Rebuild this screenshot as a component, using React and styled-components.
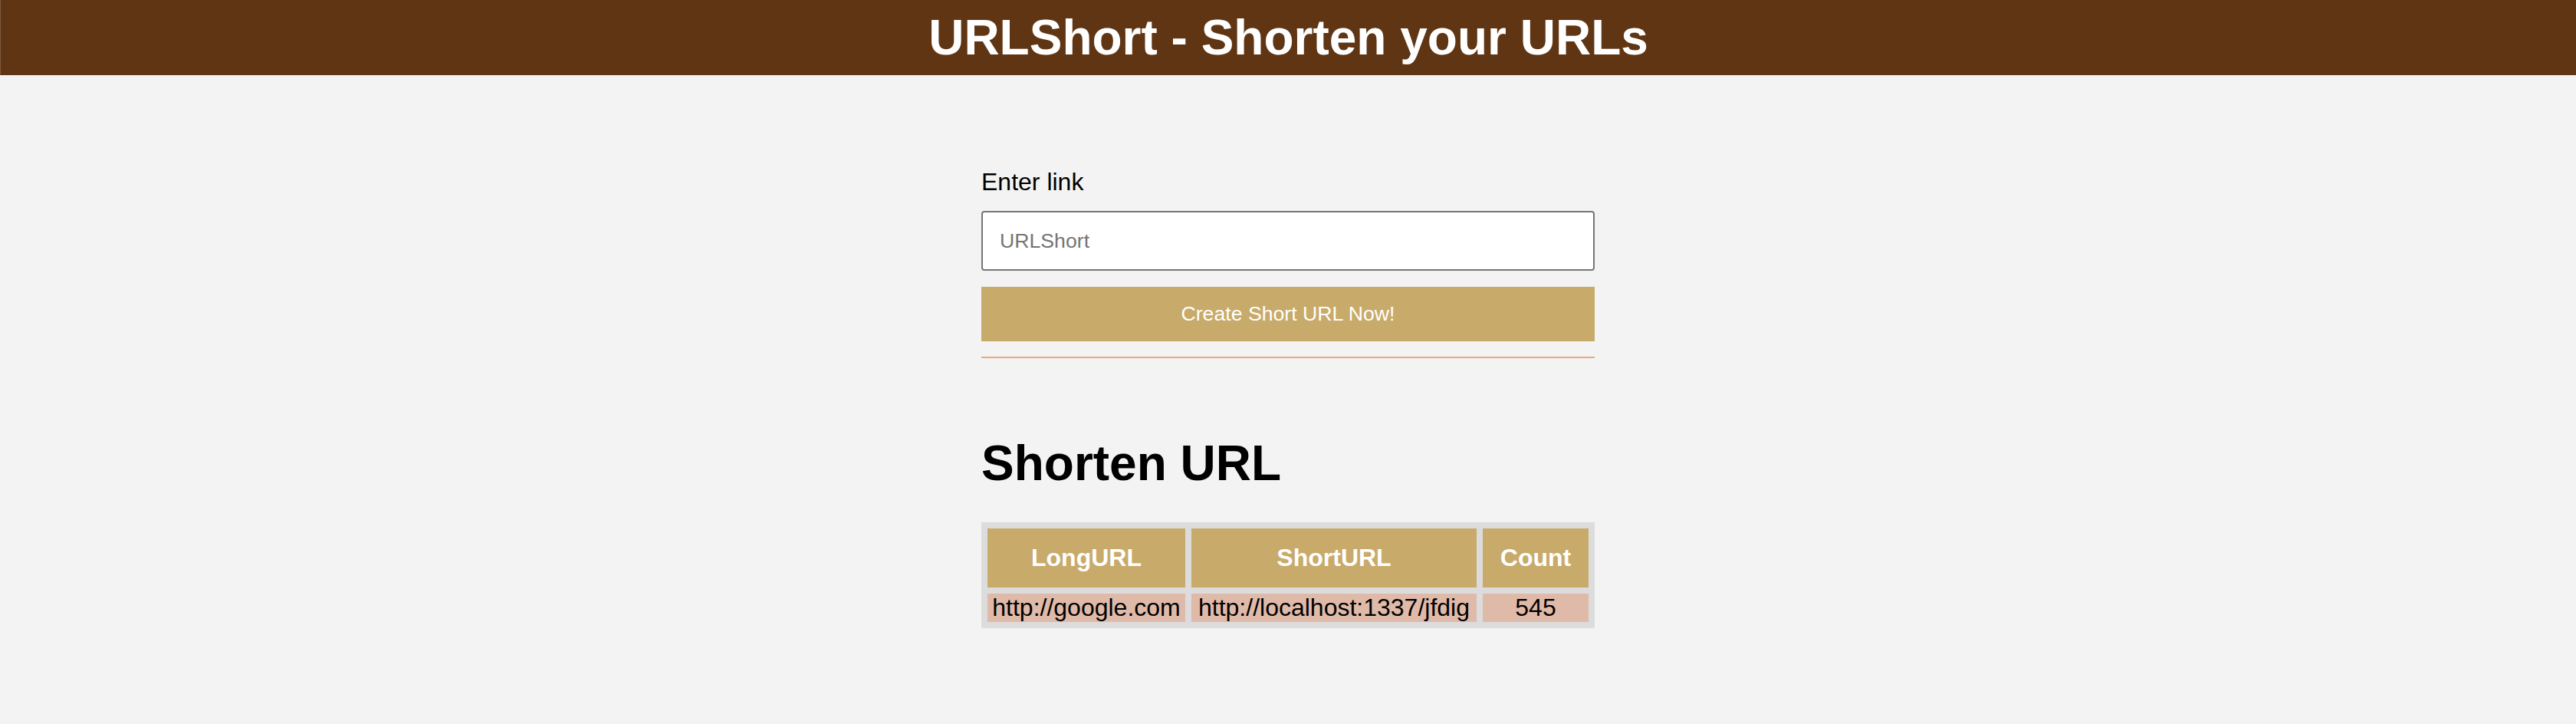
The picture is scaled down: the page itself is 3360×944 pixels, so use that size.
import React from 'react';
import styled, { createGlobalStyle } from 'styled-components';

const GlobalStyle = createGlobalStyle`
  body {
    margin: 0;
    background-color: #f3f3f3;
    font-family: "Liberation Sans", Arial, Helvetica, sans-serif;
    color: #000;
  }
`;

const Header = styled.header`
  height: 98px;
  display: flex;
  align-items: center;
  justify-content: center;
  background-color: #603513;
  border-left: 1px solid #7d5a3e;
  color: white;
`;

const Title = styled.h1`
  margin: 0;
  font-size: 64px;
  font-weight: bold;
`;

const Main = styled.main`
  width: 800px;
  margin: 0 auto;
  padding-top: 121px;
`;

const Label = styled.label`
  display: block;
  font-size: 32px;
  line-height: 37px;
`;

const Input = styled.input`
  display: block;
  box-sizing: border-box;
  width: 100%;
  height: 78px;
  margin-top: 19px;
  padding: 0 22px;
  border: 2px solid #767676;
  border-radius: 4px;
  background: white;
  font-family: inherit;
  font-size: 26.67px;

  &::placeholder {
    color: #757575;
  }
`;

const Button = styled.button`
  display: block;
  width: 100%;
  height: 71px;
  margin-top: 21px;
  border: none;
  background-color: #c8aa6a;
  color: white;
  font-family: inherit;
  font-size: 26.67px;
  cursor: pointer;
`;

const Divider = styled.hr`
  height: 2px;
  margin: 20px 0 0;
  border: none;
  background-color: #e8a97e;
`;

const Heading = styled.h2`
  margin: 100px 0 40px;
  font-size: 64px;
  line-height: 74px;
  font-weight: bold;
`;

const Table = styled.table`
  width: 100%;
  table-layout: fixed;
  border-spacing: 8px;
  background-color: #dcdcdc;
  font-size: 32px;
`;

const Th = styled.th`
  width: ${(p) => p.$w}px;
  padding: 20px 0;
  line-height: 37px;
  background-color: #c8aa6a;
  color: white;
  font-weight: bold;
`;

const Td = styled.td`
  padding: 0;
  line-height: 37px;
  text-align: center;
  white-space: nowrap;
  background-color: #e0baa9;
`;

const urls = [
  { long: 'http://google.com', short: 'http://localhost:1337/jfdig', count: 545 },
];

const App = () => (
  <>
    <GlobalStyle />
    <Header>
      <Title>URLShort - Shorten your URLs</Title>
    </Header>
    <Main>
      <Label htmlFor="link">Enter link</Label>
      <Input id="link" type="text" placeholder="URLShort" />
      <Button>Create Short URL Now!</Button>
      <Divider />
      <Heading>Shorten URL</Heading>
      <Table>
        <thead>
          <tr>
            <Th $w={258}>LongURL</Th>
            <Th $w={372}>ShortURL</Th>
            <Th $w={138}>Count</Th>
          </tr>
        </thead>
        <tbody>
          {urls.map((u) => (
            <tr key={u.short}>
              <Td>{u.long}</Td>
              <Td>{u.short}</Td>
              <Td>{u.count}</Td>
            </tr>
          ))}
        </tbody>
      </Table>
    </Main>
  </>
);

export default App;
